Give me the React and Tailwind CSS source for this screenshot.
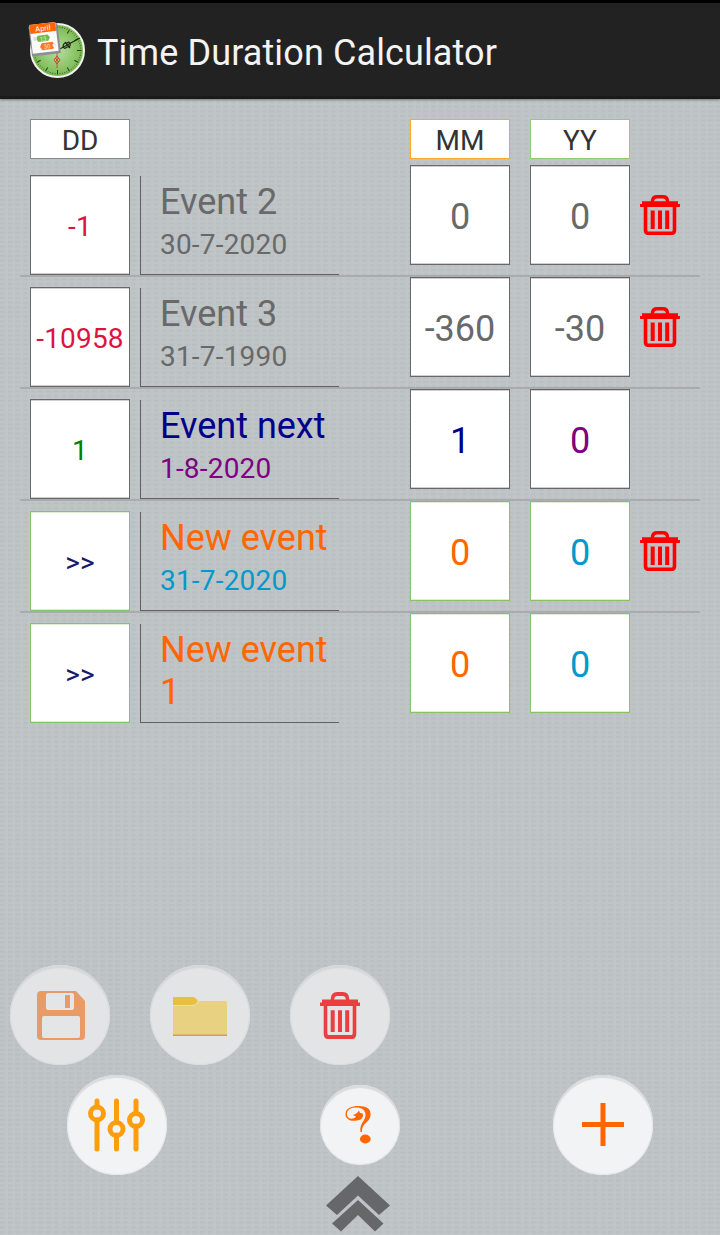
const texture =
  "bg-[#c0c5c8] bg-[repeating-linear-gradient(0deg,#c0c5c8_0px,#c0c5c8b3_2px,#c0c5c84d_3.2px,#c0c5c8_4.67px),repeating-linear-gradient(90deg,#a8abaf66_0px,#a8abaf66_4px,transparent_5.5px,transparent_7.7px),repeating-linear-gradient(90deg,#b3b7ba2e_0px,transparent_24px,#b3b7ba38_44px,transparent_67px)]";

function Trash({ className, h = 40 }) {
  return (
    <svg className={className} width="40" height={h} viewBox="0 0 40 40" preserveAspectRatio="none" fill="none" stroke="currentColor">
      <path d="M12.5 7V5.5Q13 1.8 17 1.8H23Q27 1.8 27.5 5.5V7" strokeWidth="3.4" />
      <path d="M2 6.300H38V9H40V12H0V9H2Z" fill="currentColor" stroke="none" />
      <path d="M5.5 11V35Q5.5 38.3 8.5 38.3H31.5Q34.5 38.3 34.5 35V11" strokeWidth="3.6" />
      <path d="M12.7 15.5V34M20 15.5V34M27.2 15.5V34" strokeWidth="4" />
    </svg>
  );
}

function Logo() {
  const ticks = Array.from({ length: 60 }, (_, i) => i);
  return (
    <svg width="58" height="58" viewBox="0 0 58 58">
      <defs>
        <radialGradient id="dial">
          <stop offset="0" stopColor="#b8dda3" />
          <stop offset="1" stopColor="#77b84c" />
        </radialGradient>
      </defs>
      <circle cx="29.500" cy="29.500" r="26.5" fill="url(#dial)" stroke="#f1f1f1" strokeWidth="2" />
      {ticks.map((i) => (
        <path
          key={i}
          d={i % 5 ? "M29.500 5.500V6.800" : "M29.500 5.500V10"}
          stroke="#263d1b"
          strokeWidth={i % 5 ? 0.6 : 1}
          transform={`rotate(${i * 6} 29.5 29.5)`}
        />
      ))}
      <path d="M29 29.500L52 17" stroke="#1c2a16" strokeWidth="1.1" />
      <path d="M35 25q1-4 4-3q3-2 3 1q1 3-3 3q-3 3-4-1zM37 21l5 6" stroke="#1c2a16" strokeWidth="1.2" fill="none" />
      <path d="M29 28V47M29 35l-3 4l3 4l3-4zM27 37l4 4M31 37l-4 4" stroke="#d0442b" strokeWidth="0.9" fill="none" />
      <g transform="rotate(-7 15 17)">
        <rect x="2" y="4" width="29" height="30" fill="#8b8f92" />
        <rect x="3" y="2.5" width="26" height="29" fill="#fafafa" />
        <rect x="3" y="2.5" width="26" height="9" fill="#ff6502" />
        <path d="M10 14h10l2 3l-2 3.500H10l-2-3.500z" fill="#72ba4b" />
        <path d="M13 22h11l2 3.500l-2 3.500H13l-2-3.500z" fill="#ff7624" />
        <circle cx="7" cy="17" r="2" fill="#ddd" />
        <circle cx="25.500" cy="25.500" r="2" fill="#eee" />
        <text x="16" y="10" textAnchor="middle" fontSize="7.500" fill="#fff" fontFamily="Roboto, sans-serif">April</text>
        <text x="15" y="20" textAnchor="middle" fontSize="6" fill="#dff3d2" fontFamily="Roboto, sans-serif">13</text>
        <text x="18" y="28" textAnchor="middle" fontSize="6" fill="#ffe0cc" fontFamily="Roboto, sans-serif">30</text>
      </g>
    </svg>
  );
}

const gray = "border-[#68686a] shadow-[inset_0_1px_0_#cfcfcf,inset_0_-1px_0_#cfcfcf]";
const green = "border-[#87c465] shadow-[inset_0_1px_0_#dcefd0,inset_0_-1px_0_#dcefd0]";

const rows = [
  { days: "-1", dc: "text-[#dc143c]", title: "Event 2", tc: "text-[#696969]", date: "30-7-2020", ec: "text-[#696969]", m: "0", mc: "text-[#696969]", y: "0", yc: "text-[#696969]", box: gray, trash: true },
  { days: "-10958", dc: "text-[#dc143c]", title: "Event 3", tc: "text-[#696969]", date: "31-7-1990", ec: "text-[#696969]", m: "-360", mc: "text-[#696969]", y: "-30", yc: "text-[#696969]", box: gray, trash: true },
  { days: "1", dc: "text-[#008000]", title: "Event next", tc: "text-[#00008b]", date: "1-8-2020", ec: "text-[#800080]", m: "1", mc: "text-[#00008b]", y: "0", yc: "text-[#800080]", box: gray, trash: false },
  { days: ">>", dc: "text-[#191970]", title: "New event", tc: "text-[#ff6600]", date: "31-7-2020", ec: "text-[#0099cc]", m: "0", mc: "text-[#ff6600]", y: "0", yc: "text-[#0099cc]", box: green, trash: true },
  { days: ">>", dc: "text-[#191970]", title: "New event 1", tc: "text-[#ff6600]", date: "", ec: "", m: "0", mc: "text-[#ff6600]", y: "0", yc: "text-[#0099cc]", box: green, trash: false },
];

function Row({ r, last }) {
  return (
    <div className={`mx-5 flex h-28 border-b-2 pl-2.5 ${last ? "border-transparent" : "border-[#a9acaf]"}`}>
      <div className={`mt-2.5 flex h-[100px] w-[100px] shrink-0 items-center justify-center border bg-white pt-1 text-[28px] tracking-[0.2px] ${r.box} ${r.dc}`}>
        {r.days}
      </div>
      <div className="mt-[11px] ml-2.5 h-[99px] w-[199px] shrink-0 border-b border-l border-[#606164] pt-[5px] pl-[19px]">
        <div className={`text-[36px] leading-[42px] ${r.tc}`}>{r.title}</div>
        <div className={`pt-px text-[28px] leading-[42px] tracking-[0.2px] ${r.ec}`}>{r.date}</div>
      </div>
      <div className={`ml-[71px] flex h-[100px] w-[100px] shrink-0 items-center justify-center border bg-white pt-1 text-[36px] ${r.box} ${r.mc}`}>
        {r.m}
      </div>
      <div className={`ml-5 flex h-[100px] w-[100px] shrink-0 items-center justify-center border bg-white pt-1 text-[36px] ${r.box} ${r.yc}`}>
        {r.y}
      </div>
      {r.trash && <Trash className="mt-[30px] ml-2.5 shrink-0 text-[#ff0000]" />}
    </div>
  );
}

const heading = "flex h-10 w-[100px] items-center justify-center border bg-white pt-1 text-[28px] text-[#333]";
const round = "flex h-[100px] w-[100px] shrink-0 items-center justify-center rounded-full bg-[#f2f3f5] shadow-[inset_0_3px_1px_#dadbdb,inset_0_0_0_1px_#e6e7e8]";
const faded = "flex h-[100px] w-[100px] shrink-0 items-center justify-center rounded-full bg-[#e2e4e6] shadow-[inset_0_3px_1px_#d5d7d9,inset_0_0_0_1px_#dbdddf]";

export default function App() {
  return (
    <div className={`flex h-[1235px] w-[720px] flex-col overflow-hidden font-[Roboto,sans-serif] ${texture}`}>
      <header className="flex h-[99px] shrink-0 items-center border-t-[3px] border-b-[3px] border-t-black border-b-[#1b1a1b] bg-[#222] pl-7 text-[#f3f3f3] shadow-[0_1px_2px_#777]">
        <Logo />
        <h1 className="ml-[11px] pt-1.5 text-[36px] leading-[42px] tracking-[0.12px] whitespace-nowrap">Time Duration Calculator</h1>
      </header>
      <div className="mt-5 mb-1.5 flex shrink-0 pl-[30px]">
        <div className={`${heading} border-[#858789]`}>DD</div>
        <div className={`${heading} ml-[280px] border-[#ffa827]`}>MM</div>
        <div className={`${heading} ml-5 border-[#93cb72]`}>YY</div>
      </div>
      <main className="h-[800px] shrink-0">
        {rows.map((r, i) => (
          <Row key={i} r={r} last={i === rows.length - 1} />
        ))}
      </main>
      <div className="flex shrink-0 gap-10 pl-2.5">
        <button className={faded}>
          <svg className="ml-0.5" width="48" height="49" viewBox="0 0 48 49">
            <path d="M4 0H39L48 10V45Q48 49 44 49H4Q0 49 0 45V4Q0 0 4 0Z" fill="#e99b67" />
            <rect x="9" y="2" width="28" height="17" rx="2" fill="#e3e5e6" />
            <rect x="28" y="4" width="5" height="13" fill="#e99b67" />
            <rect x="5" y="25" width="38" height="22" rx="2" fill="#e3e5e6" />
          </svg>
        </button>
        <button className={faded}>
          <svg className="mt-0.5" width="54" height="39" viewBox="0 0 54 39">
            <path d="M0 8H20L26 4H52Q54 4 54 6V38H0Z" fill="#e9d182" />
            <path d="M0 0H20Q22 0 25 4Q22 8 20 8H0Z" fill="#e9be43" />
            <path d="M0 8.500H20Q22 8.500 26 4.500" fill="none" stroke="#f0dfa4" />
            <path d="M0 38.200H54" stroke="#d99a58" strokeWidth="1.400" />
          </svg>
        </button>
        <button className={faded}>
          <Trash className="text-[#eb3e40]" h={47} />
        </button>
      </div>
      <div className="mt-2.5 flex shrink-0 items-center pl-[67px]">
        <button className={round}>
          <svg className="mr-0.5" width="58" height="56" viewBox="0 0 58 56" fill="none" stroke="#ff9d0b" strokeLinecap="round" strokeWidth="5">
            <path d="M10 4V10M10 23V52M29.500 4V25M29.500 38V52M49 4V16M49 29V52" />
            <circle cx="10" cy="16.500" r="6.500" />
            <circle cx="29.500" cy="32" r="6.500" />
            <circle cx="49" cy="23" r="6.500" />
          </svg>
        </button>
        <button className="ml-[153px] flex h-20 w-20 shrink-0 items-center justify-center rounded-full bg-[#f2f3f5] shadow-[inset_0_3px_1px_#dadbdb,inset_0_0_0_1px_#e6e7e8]">
          <svg width="30" height="40" viewBox="0 0 30 40" fill="#ff6600">
            <path d="M12 15.500C4 17 0 13 .5 8.500C1 3 7 1 13 1C22 1 26 4 25.500 10C25 18 17 17 17 27H15.500C14 18 21 16 20.500 9C20 4 15 2 10 2.500C4 3 1.500 6 2 10C2.500 13.500 6 14.500 9.500 13L11 11.500L8 10Q10 9.500 12 8L14 5.500L15 8Q18.500 7.500 18 11Q17 15 12 15.500Z" />
            <ellipse cx="20.300" cy="34" rx="5.400" ry="4.400" />
          </svg>
        </button>
        <button className={`${round} ml-[153px]`}>
          <svg className="mr-px mb-px" width="42" height="43" viewBox="0 0 42 43" stroke="#ff6600" strokeWidth="5">
            <path d="M21 0V43M0 21.500H42" />
          </svg>
        </button>
      </div>
      <svg className="mt-px ml-[325px] shrink-0" width="66" height="56" viewBox="0 0 66 56" fill="#666769">
        <path d="M33 0L65 29.500L54 39L33 19.500L12 39L1 29.500Z" />
        <path d="M33 24L58.500 47.500L50 55.500L33 39L16 55.500L7 47.500Z" />
      </svg>
    </div>
  );
}
